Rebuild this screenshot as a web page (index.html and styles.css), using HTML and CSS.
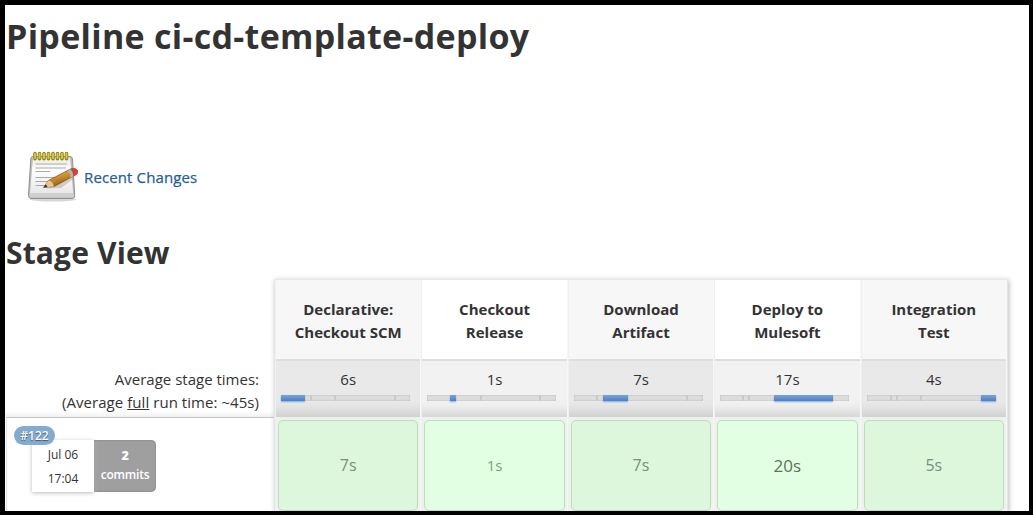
FILE: index.html
```html
<!DOCTYPE html>
<html lang="en">
<head>
<meta charset="utf-8">
<title>Pipeline ci-cd-template-deploy</title>
<link rel="stylesheet" href="styles.css">
</head>
<body>
<main class="page">
  <h1 class="title"><span>Pipeline ci-cd-template-deploy</span></h1>
  <a class="changes">
    <svg class="notepad" width="52" height="52" viewBox="0 0 52 52">
      <defs>
        <linearGradient id="paper" x1="0" y1="0" x2="0" y2="1"><stop offset="0" stop-color="#e8e8e8"/><stop offset=".35" stop-color="#fff"/><stop offset="1" stop-color="#e7e7e7"/></linearGradient>
        <linearGradient id="wood" x1="0" y1="0" x2=".5" y2="1"><stop offset="0" stop-color="#edc36f"/><stop offset=".5" stop-color="#d39435"/><stop offset="1" stop-color="#855416"/></linearGradient>
      </defs>
      <ellipse cx="26" cy="49.500" rx="23" ry="2" fill="#bbb" opacity=".6"/>
      <path d="M5.500 6.500Q4 6.500 3.800 9L1.500 45Q1.500 48.500 4 48.500H45Q48 48.500 47.700 45L45.500 9Q45 6.500 43.500 6.500Z" fill="#bdbdbd" stroke="#909090"/>
      <path d="M6 7.500H43L46.300 43.500H3Z" fill="url(#paper)"/>
      <path d="M2.500 44H47V46Q46.500 47.500 45 47.500H4.500Q2.500 47 2.500 46Z" fill="#d0d0d0"/>
      <path d="M8.500 14H40M8.500 18H39M8.500 21.500H23M8.500 27.500H36M8.500 31.500H28M8.500 35.500H22" stroke="#a9a9a9" stroke-width="1.200"/>
      <path d="M8 3.500V8.800M12.500 3.500V8.800M17 3.500V8.800M21.500 3.500V8.800M26 3.500V8.800M30.500 3.500V8.800M35 3.500V8.800M39.500 3.500V8.800" stroke="#958415" stroke-width="3.600" stroke-linecap="round"/>
      <path d="M8 3.800V8M12.500 3.800V8M17 3.800V8M21.500 3.800V8M26 3.800V8M30.500 3.800V8M35 3.800V8M39.500 3.800V8" stroke="#d7c544" stroke-width="1.900" stroke-linecap="round"/>
      <path d="M19 38.500L34 38 47 28.500 45 27.500Z" fill="#888" opacity=".35"/>
      <path d="M16.500 37.500L21.500 30.500 43.500 19Q48 17 50.500 20.500Q51.500 23 49 24.800L27 36.500Z" fill="url(#wood)" stroke="#744914" stroke-width=".7"/>
      <path d="M16.500 37.500L21.500 30.500Q25.500 31 27 36.500Z" fill="#e9c58b"/>
      <path d="M16.500 37.500L18.500 34.500Q20 35 20.500 37Z" fill="#333"/>
      <path d="M40.500 20.600L43.500 19Q46 21 46.500 26.200L43.500 27.800Q43 23 40.500 20.600Z" fill="#b9b2a4"/>
      <path d="M43.500 19Q48 16.700 50.500 20.500Q51.500 23 49 24.800L46.500 26.200Q46 21.500 43.500 19Z" fill="#d83c41"/>
    </svg>
    <span class="changes-label">Recent Changes</span>
  </a>
  <h2 class="subtitle"><span>Stage View</span></h2>
  <div class="stage-view">
    <aside class="side">
      <div class="averages">
        <div><span class="avg-one">Average stage times:</span></div>
        <div><span class="avg-two">(Average <u>full</u> run time: ~45s)</span></div>
      </div>
      <div class="run">
        <div class="run-box">
          <div class="run-date"><span class="build">#122</span><span>Jul 06</span><span>17:04</span></div>
          <div class="commits"><b>2</b><span>commits</span></div>
        </div>
      </div>
    </aside>
    <section class="stages">
      <div class="stage odd">
        <div class="head"><span>Declarative:</span><span>Checkout SCM</span></div>
        <div class="avg"><span>6s</span><div class="bar"><i class="fill" style="width:24px"></i><i class="tick" style="margin-left:5px"></i><i class="tick" style="margin-left:22px"></i><i class="tick" style="margin-left:58px"></i></div></div>
        <div class="cell"><div class="result">7s</div></div>
      </div>
      <div class="stage">
        <div class="head"><span>Checkout</span><span>Release</span></div>
        <div class="avg"><span>1s</span><div class="bar"><i class="fill" style="margin-left:23px;width:6px"></i><i class="tick" style="margin-left:24px"></i><i class="tick" style="margin-left:57px"></i></div></div>
        <div class="cell"><div class="result faint">1s</div></div>
      </div>
      <div class="stage odd">
        <div class="head"><span>Download</span><span>Artifact</span></div>
        <div class="avg"><span>7s</span><div class="bar"><i class="tick" style="margin-left:22px"></i><i class="fill" style="margin-left:5px;width:25px"></i><i class="tick" style="margin-left:58px"></i></div></div>
        <div class="cell"><div class="result">7s</div></div>
      </div>
      <div class="stage">
        <div class="head"><span>Deploy to</span><span>Mulesoft</span></div>
        <div class="avg"><span>17s</span><div class="bar"><i class="tick" style="margin-left:22px"></i><i class="tick" style="margin-left:4px"></i><i class="fill" style="margin-left:24px;width:59px"></i></div></div>
        <div class="cell"><div class="result slow">20s</div></div>
      </div>
      <div class="stage odd">
        <div class="head"><span>Integration</span><span>Test</span></div>
        <div class="avg"><span>4s</span><div class="bar"><i class="tick" style="margin-left:23px"></i><i class="tick" style="margin-left:4px"></i><i class="tick" style="margin-left:22px"></i><i class="fill" style="margin-left:59px;width:15px"></i></div></div>
        <div class="cell"><div class="result">5s</div></div>
      </div>
    </section>
  </div>
</main>
</body>
</html>
```

FILE: styles.css
```css
* { box-sizing: border-box; }
body { margin: 0; color: #333; font: 15px/23px "Open Sans", "Noto Sans", sans-serif; }
.page { width: 1033px; height: 515px; overflow: hidden; border: solid #000; border-width: 5px 4px 4px 5px; background: #fff; }
.title, .subtitle { margin: 0; font-weight: 700; white-space: nowrap; }
.title { height: 145px; padding: 7px 0 0 1px; font-size: 34px; line-height: 48px; letter-spacing: .3px; }
.changes { display: flex; align-items: center; gap: 5px; height: 52px; padding-left: 22px; color: #1f6098; }
.changes-label { padding-top: 2px; font-weight: 500; font-size: 15px; letter-spacing: .12px; white-space: nowrap; -webkit-text-stroke: .25px #1f6098; }
.subtitle { height: 73px; padding: 31px 0 0 1px; font-size: 30px; line-height: 40px; letter-spacing: .15px; }
.stage-view { display: grid; grid-template-columns: 269px 734px; margin-top: 4px; height: 232px; }
.side { padding-top: 89px; }
.averages { height: 49px; padding-right: 15px; text-align: right; white-space: nowrap; background: linear-gradient(#fff 88%, #f0f0f0); }
.avg-two { letter-spacing: .05px; }
.run { height: 94px; margin-left: 1px; padding: 22px 0 0 26px; border-top: 1px solid #c4c4c4; border-left: 1px solid #e4e4e4; padding-left: 25px; }
.run-box { display: flex; width: 124px; height: 52px; }
.run-date { position: relative; display: flex; flex-direction: column; align-items: center; width: 62px; padding-top: 3px; font-size: 12px; line-height: 24px; box-shadow: 0 1px 4px #bbb; }
.build { position: absolute; left: -18px; top: -14px; width: 41px; height: 19px; border-radius: 10px; background: #85aad2; color: #fff; font-size: 12px; font-weight: 600; line-height: 20px; text-align: center; text-shadow: 0 1px 1px #456; }
.commits { display: flex; flex-direction: column; align-items: center; width: 62px; padding-top: 6px; border-radius: 0 5px 5px 0; background: #9f9f9f; box-shadow: inset 0 0 2px #777; color: #fff; font-size: 12px; font-weight: 600; line-height: 19px; letter-spacing: -.2px; }
.commits b { font-size: 12.5px; }
.stages { display: grid; grid-template-columns: repeat(5, 1fr); border-top: 1px solid #e8eaea; border-left: 1px solid #e4e6e6; border-right: 1px solid #e4e4e4; box-shadow: 1px 1px 5px #bbb; background: #eef1ee; }
.stage { border-left: 1px solid #f0f0f0; border-right: 1px solid #f7f7f7; background: #fff; }
.odd { background: #f7f7f7; }
.head { display: flex; flex-direction: column; align-items: center; height: 81px; padding-top: 18px; border-bottom: 2px solid #dedede; font-weight: 700; white-space: nowrap; }
.avg { display: flex; flex-direction: column; align-items: center; height: 56px; padding-top: 7px; background: linear-gradient(#f2f2f2 70%, #eee 80%, #d7d7d7); }
.odd .avg { background: linear-gradient(#e9e9e9 70%, #e5e5e5 80%, #d1d1d1); }
.bar { display: flex; align-self: flex-start; width: 129px; height: 6px; margin: 4px 0 0 5px; background: #dedede; box-shadow: inset 0 0 2px #aaa; }
.fill { flex: none; background: linear-gradient(#7ba4d6, #4e7fc5); box-shadow: 0 1px 2px #85a9d8; }
.tick { flex: none; width: 2px; background: #c9c9c9; }
.cell { height: 94px; padding: 3px 2px 0; background: #ebf3eb; }
.result { display: flex; align-items: center; justify-content: center; height: 91px; border: 1px solid #c5d7c5; border-radius: 5px; background: #e3ffe3; color: #76917a; font-size: 16px; }
.odd .result { background: #ddf7dd; }
.faint { font-size: 15px; color: #82a082; }
.slow { font-size: 17px; color: #5d735d; }
```
